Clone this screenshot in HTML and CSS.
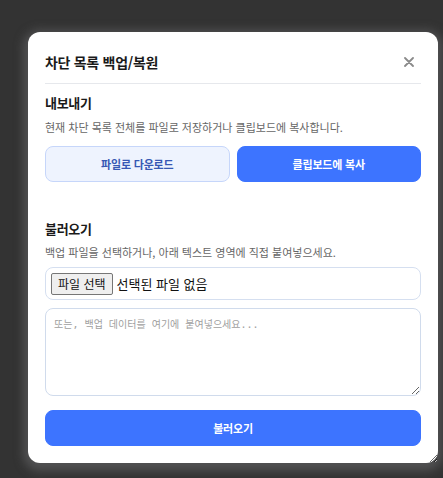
FILE: index.html
```html
<!DOCTYPE html>
<html lang="ko">
<head>
<meta charset="utf-8">
<title>차단 목록 백업/복원</title>
<link rel="stylesheet" href="styles.css">
</head>
<body>
<div class="modal">
  <div class="modal-header">
    <h2 class="modal-title">차단 목록 백업/복원</h2>
    <button class="close-btn" aria-label="닫기">
      <svg width="10" height="10" viewBox="0 0 10 10"><path d="M1 1L9 9M9 1L1 9" stroke="#8a8a8a" stroke-width="1.8" stroke-linecap="round"/></svg>
    </button>
  </div>
  <section class="section export">
    <h3 class="section-title">내보내기</h3>
    <p class="section-desc">현재 차단 목록 전체를 파일로 저장하거나 클립보드에 복사합니다.</p>
    <div class="btn-row">
      <button class="btn btn-light">파일로 다운로드</button>
      <button class="btn btn-primary">클립보드에 복사</button>
    </div>
  </section>
  <section class="section import">
    <h3 class="section-title">불러오기</h3>
    <p class="section-desc">백업 파일을 선택하거나, 아래 텍스트 영역에 직접 붙여넣으세요.</p>
    <div class="file-box">
      <label class="file-btn"><input type="file" class="file-hidden">파일 선택</label>
      <span class="file-name">선택된 파일 없음</span>
    </div>
    <textarea class="paste-area" placeholder="또는, 백업 데이터를 여기에 붙여넣으세요..."></textarea>
    <button class="btn btn-primary btn-full">불러오기</button>
  </section>
</div>
</body>
</html>
```

FILE: styles.css
```css
html, body {
  margin: 0;
  padding: 0;
}
body {
  background: #333333;
  height: 478px;
  overflow: hidden;
  font-family: "Noto Sans CJK KR", "Noto Sans", sans-serif;
  color: #1b1b1b;
}
.modal {
  box-sizing: border-box;
  width: 410px;
  height: 431px;
  margin: 32px 0 0 28px;
  padding: 0 17px 0 17px;
  background: #ffffff;
  border-radius: 12px;
  box-shadow: 0 3px 10px 5px rgba(105, 105, 108, 0.55);
  resize: both;
  overflow: auto;
}
.modal-header {
  display: flex;
  align-items: center;
  justify-content: space-between;
  padding: 20px 0 11px;
  border-bottom: 1px solid #e6e8ec;
}
.modal-title {
  margin: 0;
  font-size: 14px;
  line-height: 20px;
  font-weight: 700;
  letter-spacing: -0.3px;
  color: #1a1a1a;
}
.close-btn {
  border: 0;
  background: none;
  padding: 0;
  margin-right: 6px;
  width: 12px;
  height: 12px;
  display: flex;
  align-items: center;
  justify-content: center;
}
.section-title {
  margin: 0;
  font-size: 13px;
  line-height: 18px;
  font-weight: 700;
  letter-spacing: -0.3px;
  color: #1a1a1a;
}
.section-desc {
  margin: 7px 0 0;
  font-size: 11px;
  line-height: 16px;
  color: #666666;
}
.export {
  padding-top: 10px;
}
.export .section-desc {
  margin-bottom: 11px;
}
.import {
  padding-top: 38px;
}
.import .section-desc {
  margin-top: 6px;
  margin-bottom: 7px;
}
.btn-row {
  display: flex;
  gap: 7px;
}
.btn {
  flex: 1;
  height: 36px;
  box-sizing: border-box;
  border-radius: 8px;
  font-family: "Noto Sans CJK KR", "Noto Sans", sans-serif;
  font-size: 11px;
  font-weight: 700;
  letter-spacing: -0.2px;
  cursor: pointer;
}
.btn-light {
  background: #eef3fe;
  border: 1px solid #c6d6fa;
  color: #3658b4;
}
.btn-primary {
  background: #3d74ff;
  border: 1px solid #3d74ff;
  color: #ffffff;
}
.btn-full {
  display: block;
  width: 100%;
  margin-top: 14px;
}
.file-box {
  box-sizing: border-box;
  height: 33px;
  border: 1px solid #d5dff0;
  border-radius: 8px;
  padding: 0 5px;
  display: flex;
  align-items: center;
  gap: 4px;
}
.file-hidden {
  display: none;
}
.file-btn {
  box-sizing: border-box;
  height: 22px;
  padding: 0 6px;
  display: flex;
  align-items: center;
  background: #efefef;
  border: 1px solid #767676;
  border-radius: 2px;
  font-size: 12px;
  color: #111;
  cursor: pointer;
}
.file-name {
  font-size: 13px;
  color: #111;
}
.paste-area {
  display: block;
  box-sizing: border-box;
  width: 100%;
  height: 88px;
  margin-top: 8px;
  padding: 8px 8px;
  border: 1px solid #d0dbec;
  border-radius: 8px;
  font-family: "DejaVu Sans Mono", "Noto Sans CJK KR", monospace;
  font-size: 10px;
  line-height: 16px;
  color: #333;
  outline: none;
}
.paste-area::placeholder {
  color: #a0a0a0;
}
```
